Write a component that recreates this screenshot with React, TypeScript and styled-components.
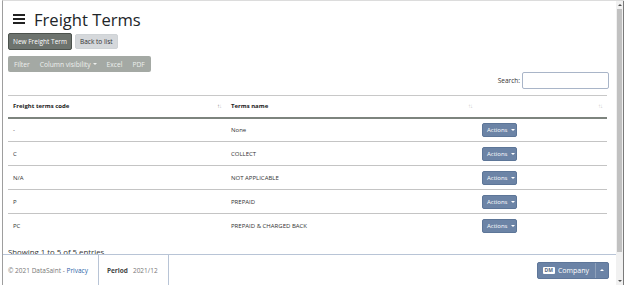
import React from "react";
import styled, { createGlobalStyle } from "styled-components";

const Global = createGlobalStyle`
  html, body { margin: 0; padding: 0; background: #fff; }
  body { font-family: "Open Sans", "Noto Sans", sans-serif; color: #212529; }
  * { box-sizing: border-box; }
`;

const FONT = `"Open Sans", "Noto Sans", sans-serif`;

const Frame = styled.div`
  width: 624px;
  height: 285px;
  display: flex;
  padding-left: 2px;
  background: #fff;
  overflow: hidden;
`;

const Window = styled.div`
  flex: 1;
  display: flex;
  border-left: 1px solid #9e9e9e;
  border-top: 1px solid #dcdcdc;
  min-width: 0;
`;

const PageCol = styled.div`
  flex: 1;
  display: flex;
  flex-direction: column;
  min-width: 0;
`;

const Main = styled.div`
  flex: 1;
  overflow: hidden;
  padding: 2px 7px 0 5px;
  display: flex;
  flex-direction: column;
  & > * {
    flex-shrink: 0;
  }
`;

const TitleRow = styled.div`
  display: flex;
  align-items: center;
  gap: 8px;
  height: 29px;
  padding: 3px 0 0 5px;
`;

const Title = styled.h1`
  margin: 0;
  font-family: ${FONT};
  font-size: 16.6px;
  font-weight: 500;
  color: #212529;
`;

const ButtonRow = styled.div`
  display: flex;
  gap: 3px;
  align-items: center;
  height: 17px;
  margin-top: 1px;
`;

const Btn = styled.button<{ $variant: "dark" | "light" }>`
  font-family: ${FONT};
  font-size: 6.5px;
  height: ${(p) => (p.$variant === "dark" ? "17px" : "15px")};
  padding: 0 4px;
  border-radius: 2px;
  cursor: pointer;
  border: 1px solid ${(p) => (p.$variant === "dark" ? "#4c524d" : "#cfd3d6")};
  background: ${(p) => (p.$variant === "dark" ? "#6d736e" : "#d5d8db")};
  color: ${(p) => (p.$variant === "dark" ? "#fff" : "#333")};
`;

const Group = styled.div`
  display: inline-flex;
  align-self: flex-start;
  margin-top: 6px;
  height: 16px;
  background: #a4a9a4;
  border-radius: 2px;
  padding: 0 1px;
`;

const GroupBtn = styled.span`
  font-family: ${FONT};
  font-size: 6.7px;
  color: #eef0ee;
  display: flex;
  align-items: center;
  padding: 0 5px;
`;

const Caret = styled.span`
  display: inline-block;
  width: 0;
  height: 0;
  border-left: 2px solid transparent;
  border-right: 2px solid transparent;
  border-top: 2.5px solid currentColor;
  margin-left: 2px;
`;

const SearchRow = styled.div`
  display: flex;
  justify-content: flex-end;
  align-items: center;
  gap: 2px;
  height: 17px;
`;

const SearchLabel = styled.label`
  font-family: ${FONT};
  font-size: 6.5px;
  color: #333;
`;

const SearchInput = styled.input`
  width: 87px;
  height: 17px;
  border: 1px solid #a9b5c8;
  border-radius: 2px;
  outline: none;
`;

const Table = styled.table`
  margin-top: 6px;
  width: 599px;
  border-collapse: collapse;
  font-family: ${FONT};
  font-size: 6px;
  color: #333;
  border-top: 1px solid #c8c8c8;
`;

const Th = styled.th<{ $w: number }>`
  width: ${(p) => p.$w}px;
  height: 22px;
  text-align: left;
  padding: 0 5px;
  font-weight: 700;
  color: #222;
  border-bottom: 2px solid #7d847e;
  position: relative;
`;

const SortIcon = styled.span<{ $active?: boolean }>`
  position: absolute;
  right: 5px;
  top: 50%;
  transform: translateY(-50%);
  font-size: 6px;
  font-weight: 400;
  letter-spacing: -1px;
  color: #c8c8c8;
  & > b {
    font-weight: 400;
    color: ${(p) => (p.$active ? "#888" : "#c8c8c8")};
  }
`;

const Td = styled.td`
  height: 24px;
  padding: 0 5px;
  vertical-align: middle;
`;

const Tr = styled.tr<{ $last?: boolean }>`
  border-bottom: ${(p) => (p.$last ? "none" : "1px solid #c4c4c4")};
`;

const ActionsBtn = styled.button`
  font-family: ${FONT};
  font-size: 6px;
  color: #fff;
  background: #6c84a6;
  border: 1px solid #5d7698;
  border-radius: 2px;
  height: 14px;
  width: 35px;
  padding: 0 0 0 4px;
  display: flex;
  align-items: center;
  gap: 2px;
`;

const Info = styled.div`
  font-family: ${FONT};
  font-size: 7.8px;
  color: #333;
  margin-top: 9px;
`;

const Footer = styled.footer`
  height: 31px;
  flex: 0 0 31px;
  border-top: 1px solid #b8c4d6;
  display: flex;
  align-items: stretch;
  font-family: ${FONT};
  font-size: 6.5px;
  color: #777;
  padding: 0 7px 0 5px;
  background: #fff;
`;

const FootCell = styled.div<{ $border?: boolean; $grow?: boolean }>`
  display: flex;
  align-items: center;
  padding: 0 ${(p) => (p.$grow ? "0" : "10px")} 0 ${(p) => (p.$border ? "8px" : "0")};
  border-left: ${(p) => (p.$border ? "1px solid #b8c4d6" : "none")};
  flex: ${(p) => (p.$grow ? "1" : "0 0 auto")};
  justify-content: ${(p) => (p.$grow ? "flex-end" : "flex-start")};
  white-space: pre;
`;

const Link = styled.a`
  color: #2a5fa8;
  text-decoration: none;
`;

const Bold = styled.span`
  font-weight: 700;
  color: #444;
  margin-right: 5px;
`;

const Split = styled.div`
  display: flex;
  height: 17px;
  background: #6b83a6;
  border: 1px solid #5e7699;
  border-radius: 2px;
  color: #fff;
  font-size: 7px;
`;

const SplitMain = styled.div`
  display: flex;
  align-items: center;
  gap: 3px;
  padding: 0 6px 0 5px;
  border-right: 1px solid #8ea0ba;
`;

const Badge = styled.span`
  background: #fff;
  color: #55667e;
  font-size: 5px;
  font-weight: 700;
  padding: 1px 2px;
  border-radius: 1px;
  line-height: 1;
`;

const SplitCaret = styled.div`
  width: 12px;
  display: flex;
  align-items: center;
  justify-content: center;
  &::after {
    content: "";
    border-left: 2px solid transparent;
    border-right: 2px solid transparent;
    border-bottom: 2px solid #fff;
  }
`;

const Scrollbar = styled.div`
  width: 8px;
  flex: 0 0 8px;
  display: flex;
  flex-direction: column;
  background: #f1f1f1;
  border-right: 1px solid #7a7a7a;
`;

const Arrow = styled.div<{ $dir: "up" | "down" }>`
  height: 8px;
  display: flex;
  align-items: center;
  justify-content: center;
  &::after {
    content: "";
    border-left: 2px solid transparent;
    border-right: 2px solid transparent;
    ${(p) => (p.$dir === "up" ? "border-bottom" : "border-top")}: 2px solid #505050;
  }
`;

const Track = styled.div`
  flex: 1;
  display: flex;
  flex-direction: column;
  padding: 0 1px;
`;

const Thumb = styled.div`
  height: 243px;
  background: #c1c1c1;
`;

const Hamburger = () => (
  <svg width="13" height="12" viewBox="0 0 13 12">
    <rect x="0" y="1" width="12" height="2" fill="#222" />
    <rect x="0" y="5" width="12" height="2" fill="#222" />
    <rect x="0" y="9" width="12" height="2" fill="#222" />
  </svg>
);

const rows = [
  { code: "-", name: "None" },
  { code: "C", name: "COLLECT" },
  { code: "N/A", name: "NOT APPLICABLE" },
  { code: "P", name: "PREPAID" },
  { code: "PC", name: "PREPAID & CHARGED BACK" },
];

export default function App() {
  return (
    <>
      <Global />
      <Frame>
        <Window>
          <PageCol>
            <Main>
              <TitleRow>
                <Hamburger />
                <Title>Freight Terms</Title>
              </TitleRow>
              <ButtonRow>
                <Btn $variant="dark">New Freight Term</Btn>
                <Btn $variant="light">Back to list</Btn>
              </ButtonRow>
              <Group>
                <GroupBtn>Filter</GroupBtn>
                <GroupBtn>
                  Column visibility
                  <Caret />
                </GroupBtn>
                <GroupBtn>Excel</GroupBtn>
                <GroupBtn>PDF</GroupBtn>
              </Group>
              <SearchRow>
                <SearchLabel>Search:</SearchLabel>
                <SearchInput />
              </SearchRow>
              <Table>
                <thead>
                  <tr>
                    <Th $w={218}>
                      Freight terms code
                      <SortIcon $active>
                        <b>↑</b>↓
                      </SortIcon>
                    </Th>
                    <Th $w={251}>
                      Terms name
                      <SortIcon>↑↓</SortIcon>
                    </Th>
                    <Th $w={130}>
                      <SortIcon>↑↓</SortIcon>
                    </Th>
                  </tr>
                </thead>
                <tbody>
                  {rows.map((r, i) => (
                    <Tr key={r.code} $last={i === rows.length - 1}>
                      <Td>{r.code}</Td>
                      <Td>{r.name}</Td>
                      <Td>
                        <ActionsBtn>
                          Actions
                          <Caret />
                        </ActionsBtn>
                      </Td>
                    </Tr>
                  ))}
                </tbody>
              </Table>
              <Info>Showing 1 to 5 of 5 entries</Info>
            </Main>
            <Footer>
              <FootCell>
                © 2021 DataSaint - <Link href="#">Privacy</Link>
              </FootCell>
              <FootCell $border>
                <Bold>Period</Bold>2021/12
              </FootCell>
              <FootCell $border $grow>
                <Split>
                  <SplitMain>
                    <Badge>DM</Badge>
                    Company
                  </SplitMain>
                  <SplitCaret />
                </Split>
              </FootCell>
            </Footer>
          </PageCol>
          <Scrollbar>
            <Arrow $dir="up" />
            <Track>
              <Thumb />
            </Track>
            <Arrow $dir="down" />
          </Scrollbar>
        </Window>
      </Frame>
    </>
  );
}
